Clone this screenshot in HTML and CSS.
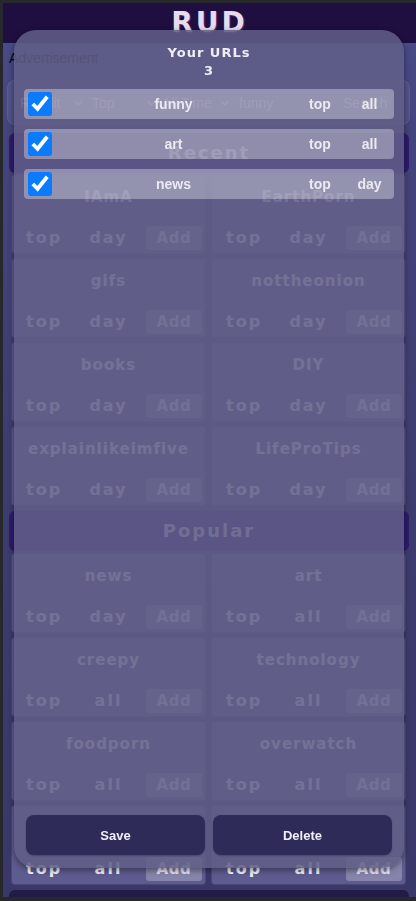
FILE: index.html
```html
<!DOCTYPE html>
<html lang="en">
<head>
<meta charset="utf-8">
<title>RUD</title>
<link rel="stylesheet" href="styles.css">
</head>
<body>
<div class="page">
  <header class="top"><h1 class="logo">RUD</h1></header>
  <div class="ad">Advertisement</div>
  <div class="search">
    <div class="sel sel-src"><span>Reddit</span><svg class="chev" viewBox="0 0 10 6"><polyline points="1,1 5,5 9,1"/></svg></div>
    <div class="sel sel-sort"><span>Top</span><svg class="chev" viewBox="0 0 10 6"><polyline points="1,1 5,5 9,1"/></svg></div>
    <div class="sel sel-time"><span>All Time</span><svg class="chev" viewBox="0 0 10 6"><polyline points="1,1 5,5 9,1"/></svg></div>
    <div class="inp">funny</div>
    <div class="sbtn">Search</div>
  </div>

  <h2 class="section">Recent</h2>
  <div class="grid">
    <div class="card"><div class="ctitle">IAmA</div><div class="crow"><span>top</span><span>day</span><span class="add">Add</span></div></div>
    <div class="card"><div class="ctitle">EarthPorn</div><div class="crow"><span>top</span><span>day</span><span class="add">Add</span></div></div>
    <div class="card"><div class="ctitle">gifs</div><div class="crow"><span>top</span><span>day</span><span class="add">Add</span></div></div>
    <div class="card"><div class="ctitle">nottheonion</div><div class="crow"><span>top</span><span>day</span><span class="add">Add</span></div></div>
    <div class="card"><div class="ctitle">books</div><div class="crow"><span>top</span><span>day</span><span class="add">Add</span></div></div>
    <div class="card"><div class="ctitle">DIY</div><div class="crow"><span>top</span><span>day</span><span class="add">Add</span></div></div>
    <div class="card"><div class="ctitle">explainlikeimfive</div><div class="crow"><span>top</span><span>day</span><span class="add">Add</span></div></div>
    <div class="card"><div class="ctitle">LifeProTips</div><div class="crow"><span>top</span><span>day</span><span class="add">Add</span></div></div>
  </div>

  <h2 class="section section-pop">Popular</h2>
  <div class="grid grid-pop">
    <div class="card"><div class="ctitle">news</div><div class="crow"><span>top</span><span>day</span><span class="add">Add</span></div></div>
    <div class="card"><div class="ctitle">art</div><div class="crow"><span>top</span><span>all</span><span class="add">Add</span></div></div>
    <div class="card"><div class="ctitle">creepy</div><div class="crow"><span>top</span><span>all</span><span class="add">Add</span></div></div>
    <div class="card"><div class="ctitle">technology</div><div class="crow"><span>top</span><span>all</span><span class="add">Add</span></div></div>
    <div class="card"><div class="ctitle">foodporn</div><div class="crow"><span>top</span><span>all</span><span class="add">Add</span></div></div>
    <div class="card"><div class="ctitle">overwatch</div><div class="crow"><span>top</span><span>all</span><span class="add">Add</span></div></div>
    <div class="card"><div class="ctitle">pics</div><div class="crow"><span>top</span><span>all</span><span class="add">Add</span></div></div>
    <div class="card"><div class="ctitle">aww</div><div class="crow"><span>top</span><span>all</span><span class="add">Add</span></div></div>
  </div>
  <div class="footbar"></div>
</div>

<div class="modal">
  <div class="mhead">
    <div class="mtitle">Your URLs</div>
    <div class="mcount">3</div>
  </div>
  <div class="rows">
    <div class="row"><input class="chk" type="checkbox" checked><span class="rname">funny</span><span class="rcell">top</span><span class="rcell">all</span></div>
    <div class="row"><input class="chk" type="checkbox" checked><span class="rname">art</span><span class="rcell">top</span><span class="rcell">all</span></div>
    <div class="row"><input class="chk" type="checkbox" checked><span class="rname">news</span><span class="rcell">top</span><span class="rcell">day</span></div>
  </div>
  <div class="actions">
    <button class="mbtn" type="button">Save</button>
    <button class="mbtn" type="button">Delete</button>
  </div>
</div>
</body>
</html>
```

FILE: styles.css
```css
* { box-sizing: border-box; }

html, body {
  height: 901px;
}

body {
  margin: 0;
  padding: 3px 0 4px 3px;
  background: #27282b;
  overflow: hidden;
  font-family: "DejaVu Sans", sans-serif;
}

.page {
  height: 894px;
  overflow: hidden;
  background: linear-gradient(#4b4e8c 0px, #44447c 140px, #3d3c6e 500px, #3a3868 894px);
}

.top {
  height: 40px;
  background: #1f0e40;
  display: flex;
  justify-content: center;
  align-items: center;
}

.logo {
  margin: 0;
  font: bold 28px/1 "DejaVu Sans", sans-serif;
  letter-spacing: 3px;
  color: #e8dcec;
  text-shadow: 1px 1px 1px rgba(200, 90, 180, 0.45);
}

.ad {
  padding: 7px 6px 0;
  font: 14px/16px "Liberation Sans", Arial, sans-serif;
  color: #000;
}

.search {
  margin: 14px 6px 0 4px;
  height: 45px;
  border-radius: 8px;
  background: rgba(255, 255, 255, 0.07);
  border: 1px solid rgba(255, 255, 255, 0.06);
  display: flex;
  align-items: center;
  padding-left: 12px;
  font: 14px/16px "Liberation Sans", Arial, sans-serif;
  color: #d4d3e6;
}

.sel {
  display: flex;
  align-items: center;
  justify-content: space-between;
}

.sel-src { width: 72px; padding-right: 9px; }
.sel-sort { width: 70px; padding-right: 6px; }
.sel-time { width: 77px; padding-right: 10px; }

.chev {
  width: 9px;
  height: 6px;
  fill: none;
  stroke: #d4d3e6;
  stroke-width: 1.6;
}

.inp {
  width: 104px;
}

.sbtn {
  width: 60px;
}

.section {
  margin: 8px 7px 0 6px;
  height: 40px;
  border-radius: 6px;
  background: #2e1b6c;
  display: flex;
  align-items: center;
  justify-content: center;
  font: bold 18px/1 "DejaVu Sans", sans-serif;
  letter-spacing: 2px;
  color: #dcdaf0;
}

.section-pop {
  margin-top: 5px;
}

.grid {
  margin: 1px 10px 0 8px;
  display: grid;
  grid-template-columns: 1fr 1fr;
  gap: 4px 5px;
}

.grid-pop {
  margin-top: 2px;
}

.card {
  height: 80px;
  background: #5e5b8f;
  border: 1px solid rgba(20, 16, 50, 0.25);
  border-radius: 4px;
  padding-top: 13px;
  color: #f2f0fa;
}

.ctitle {
  text-align: center;
  font: bold 15px/18px "DejaVu Sans", sans-serif;
  letter-spacing: 1px;
}

.crow {
  margin-top: 20px;
  display: grid;
  grid-template-columns: 1fr 1fr 1fr;
  align-items: center;
  height: 24px;
  font: bold 16px/24px "DejaVu Sans", sans-serif;
  letter-spacing: 2px;
  text-align: center;
}

.add {
  margin: 0 3px 0 5px;
  height: 24px;
  border-radius: 3px;
  background: rgba(255, 255, 255, 0.25);
  font-size: 15px;
  letter-spacing: 0.5px;
  color: #e4e2f2;
}

.footbar {
  margin: 5px 7px 0 6px;
  height: 30px;
  border-radius: 6px;
  background: #231b47;
}

/* Modal overlay */
.modal {
  position: fixed;
  left: 14px;
  top: 30px;
  width: 390px;
  height: 838px;
  border-radius: 22px;
  background: rgba(96, 94, 136, 0.87);
  box-shadow: 0 2px 6px rgba(0, 0, 0, 0.45);
  padding: 14px 10px 13px;
  display: flex;
  flex-direction: column;
}

.mhead {
  text-align: center;
  font: bold 13px/18px "DejaVu Sans", sans-serif;
  letter-spacing: 1px;
  color: #eeedf5;
}

.rows {
  margin-top: 9px;
  display: flex;
  flex-direction: column;
  gap: 10px;
}

.row {
  height: 30px;
  border-radius: 4px;
  background: rgba(255, 255, 255, 0.33);
  display: grid;
  grid-template-columns: 24px 243px 50px 1fr;
  align-items: center;
  padding-left: 4px;
  font: bold 14px/1 "Liberation Sans", Arial, sans-serif;
  color: #ece9f2;
}

.chk {
  width: 24px;
  height: 24px;
  margin: 0;
  accent-color: #0a7bff;
}

.rname, .rcell {
  text-align: center;
}

.actions {
  margin-top: auto;
  padding: 0 2px;
  display: grid;
  grid-template-columns: 1fr 1fr;
  gap: 8px;
}

.mbtn {
  height: 40px;
  border: 0;
  border-radius: 8px;
  background: #2f2b58;
  color: #f0eef8;
  font: bold 13px/1 "Liberation Sans", Arial, sans-serif;
  box-shadow: 0 1px 2px rgba(0, 0, 0, 0.25);
}
```
